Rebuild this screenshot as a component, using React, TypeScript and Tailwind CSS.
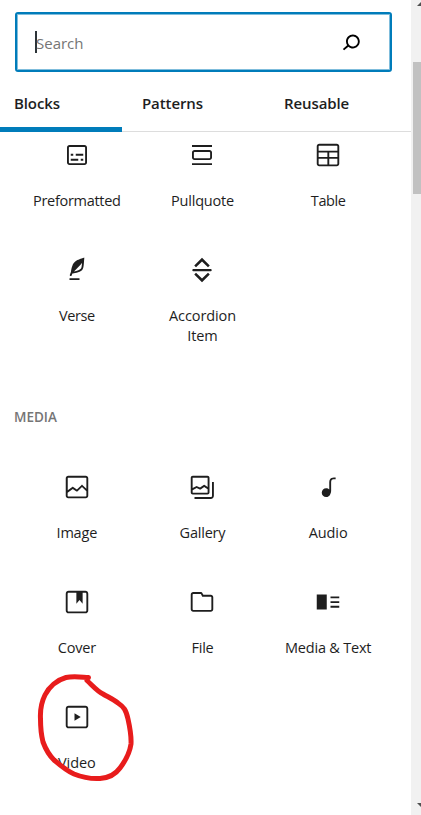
import { clsx } from 'clsx'

type Block = {
  name: string
  icon: keyof typeof paths
  spacing?: string
}

const paths = {
  preformatted:
    'M18 4H6c-1.1 0-2 .9-2 2v12c0 1.1.9 2 2 2h12c1.1 0 2-.9 2-2V6c0-1.1-.9-2-2-2zm.5 14c0 .3-.2.5-.5.5H6c-.3 0-.5-.2-.5-.5V6c0-.3.2-.5.5-.5h12c.3 0 .5.2.5.5v12zM7 16.5h6V15H7v1.5zm4-4h6V11h-6v1.5zM9 11H7v1.5h2V11zm6 5.5h2V15h-2v1.5z',
  pullquote:
    'M18 8H6c-1.1 0-2 .9-2 2v4c0 1.1.9 2 2 2h12c1.1 0 2-.9 2-2v-4c0-1.1-.9-2-2-2zm.5 6c0 .3-.2.5-.5.5H6c-.3 0-.5-.2-.5-.5v-4c0-.3.2-.5.5-.5h12c.3 0 .5.2.5.5v4zM4 4v1.5h16V4H4zm0 16h16v-1.5H4V20z',
  table:
    'M19 3H5c-1.1 0-2 .9-2 2v14c0 1.1.9 2 2 2h14c1.1 0 2-.9 2-2V5c0-1.1-.9-2-2-2zM5 4.5h14c.3 0 .5.2.5.5v3.5h-15V5c0-.3.2-.5.5-.5zm8 5.5h6.5v3.5H13V10zm-1.5 3.5h-7V10h7v3.5zm-7 5.5v-4h7v4.5H5c-.3 0-.5-.2-.5-.5zm14.5.5h-6V15h6.5v4c0 .3-.2.5-.5.5z',
  verse:
    'M17.8 2l-.9.3c-.1 0-3.6 1-5.2 2.1C10 5.5 9.3 6.5 8.9 7.1c-.6.9-1.7 4.7-1.7 6.3l-.9 2.3c-.2.4 0 .8.4 1 .1 0 .2.1.3.1.3 0 .6-.2.7-.5l.6-1.5c.3 0 .7-.1 1.2-.2.7-.1 1.4-.3 2.2-.5.8-.2 1.6-.5 2.4-.8.7-.3 1.4-.7 1.9-1.2s.8-1.2 1-1.9c.2-.7.3-1.6.4-2.4.1-.8.1-1.7.2-2.5 0-.8.1-1.5.2-2.1V2zm-1.9 5.6c-.1.8-.2 1.5-.3 2.1-.2.6-.4 1-.6 1.3-.3.3-.8.6-1.4.9-.7.3-1.4.5-2.2.8-.6.2-1.3.3-1.8.4L15 7.5c.3-.3.6-.7 1-1.1 0 .4 0 .8-.1 1.2zM6 20h8v-1.5H6V20z',
  accordion:
    'M5 11.1h14c1 0 1 1.8 0 1.8H5c-1 0-1-1.8 0-1.8zM12 2.2l6.2 6.1-1.4 1.5L12 5.2 7.2 9.8 5.8 8.3zM12 21.8l6.2-6.1-1.4-1.5L12 18.8l-4.8-4.6-1.4 1.5z',
  image:
    'M19 3H5c-1.1 0-2 .9-2 2v14c0 1.1.9 2 2 2h14c1.1 0 2-.9 2-2V5c0-1.1-.9-2-2-2zM5 4.5h14c.3 0 .5.2.5.5v8.4l-3-2.9c-.3-.3-.8-.3-1 0L11.9 14 9 12c-.3-.2-.6-.2-.8 0l-3.6 2.6V5c-.1-.3.1-.5.4-.5zm14 15H5c-.3 0-.5-.2-.5-.5v-2.4l4.1-3 3 1.9c.3.2.7.2.9-.1L16 12l3.5 3.4V19c0 .3-.2.5-.5.5z',
  gallery:
    'M16.375 4.5H4.625a.125.125 0 0 0-.125.125v8.254l2.859-1.54a.75.75 0 0 1 .68-.016l2.384 1.142 2.89-2.074a.75.75 0 0 1 .874 0l2.313 1.66V4.625a.125.125 0 0 0-.125-.125Zm.125 9.398-2.75-1.975-2.813 2.02a.75.75 0 0 1-.76.067l-2.444-1.17L4.5 14.583v1.792c0 .069.056.125.125.125h11.75a.125.125 0 0 0 .125-.125v-2.477ZM4.625 3C3.728 3 3 3.728 3 4.625v11.75C3 17.273 3.728 18 4.625 18h11.75c.898 0 1.625-.727 1.625-1.625V4.625C18 3.728 17.273 3 16.375 3H4.625ZM20 8v11c0 .69-.31 1-.999 1H6v1.5h13.001c1.52 0 2.499-.982 2.499-2.499V8H20Z',
  audio:
    'M17.7 4.3c-1.2 0-2.8 0-3.8 1-.6.6-.9 1.5-.9 2.6V14c-.6-.6-1.5-1-2.5-1C8.6 13 7 14.6 7 16.5S8.6 20 10.5 20c1.5 0 2.8-1 3.3-2.3.5-.8.7-1.8.7-2.5V7.9c0-.7.2-1.2.5-1.6.6-.6 1.8-.6 2.8-.6h.3V4.3h-.4z',
  cover:
    'M18.7 3H5.3C4 3 3 4 3 5.3v13.4C3 20 4 21 5.3 21h13.4c1.3 0 2.3-1 2.3-2.3V5.3C21 4 20 3 18.7 3zm.8 15.7c0 .4-.4.8-.8.8H5.3c-.4 0-.8-.4-.8-.8V5.3c0-.4.4-.8.8-.8h6.2v8.9l2.5-3.1 2.5 3.1V4.5h2.2c.4 0 .8.4.8.8v13.4z',
  file: 'M19 6.2h-5.9l-.6-1.1c-.3-.7-1-1.1-1.8-1.1H5c-1.1 0-2 .9-2 2v11.8c0 1.1.9 2 2 2h14c1.1 0 2-.9 2-2V8.2c0-1.1-.9-2-2-2zm.5 11.6c0 .3-.2.5-.5.5H5c-.3 0-.5-.2-.5-.5V6c0-.3.2-.5.5-.5h5.8c.2 0 .4.1.4.3l1 2H19c.3 0 .5.2.5.5v9.5z',
  mediaText: 'M3 18h8V6H3v12zM14 7.5V9h7V7.5h-7zm0 5.3h7v-1.5h-7v1.5zm0 3.7h7V15h-7v1.5z',
  video:
    'M18.7 3H5.3C4 3 3 4 3 5.3v13.4C3 20 4 21 5.3 21h13.4c1.3 0 2.3-1 2.3-2.3V5.3C21 4 20 3 18.7 3zm.8 15.7c0 .4-.4.8-.8.8H5.3c-.4 0-.8-.4-.8-.8V5.3c0-.4.4-.8.8-.8h13.4c.4 0 .8.4.8.8v13.4zM10 15l5-3-5-3v6z',
  search:
    'M13.5 6C10.5 6 8 8.5 8 11.5c0 1.1.3 2.1.9 3l-3.4 3 1 1.1 3.4-2.9c1 .9 2.2 1.4 3.6 1.4 3 0 5.5-2.5 5.5-5.5C19 8.5 16.5 6 13.5 6zm0 9.5c-2.2 0-4-1.8-4-4s1.8-4 4-4 4 1.8 4 4-1.8 4-4 4z',
}

const textBlocks: Block[] = [
  { name: 'Preformatted', icon: 'preformatted', spacing: 'tracking-[-0.3px]' },
  { name: 'Pullquote', icon: 'pullquote' },
  { name: 'Table', icon: 'table', spacing: 'tracking-[-0.4px]' },
  { name: 'Verse', icon: 'verse', spacing: 'tracking-[-0.4px]' },
  { name: 'Accordion Item', icon: 'accordion', spacing: 'tracking-[-0.1px]' },
]

const mediaBlocks: Block[] = [
  { name: 'Image', icon: 'image' },
  { name: 'Gallery', icon: 'gallery' },
  { name: 'Audio', icon: 'audio', spacing: 'tracking-[-0.1px]' },
  { name: 'Cover', icon: 'cover' },
  { name: 'File', icon: 'file' },
  { name: 'Media & Text', icon: 'mediaText' },
  { name: 'Video', icon: 'video', spacing: 'tracking-[-0.1px]' },
]

const tabs = [
  { name: 'Blocks', width: 'w-[128px]' },
  { name: 'Patterns', width: 'w-[142px]' },
  { name: 'Reusable', width: 'w-[127px]' },
]

function Icon({ name }: { name: keyof typeof paths }) {
  return (
    <svg viewBox="0 0 24 24" className="size-[30px] shrink-0" fill="currentColor" aria-hidden="true">
      <path fillRule="evenodd" d={paths[name]} />
    </svg>
  )
}

function BlockGrid({ blocks }: { blocks: Block[] }) {
  return (
    <div className="ml-[14px] grid w-[377px] grid-cols-3">
      {blocks.map((block) => (
        <button key={block.name} className="flex h-[115px] flex-col items-center px-[22px] pt-2">
          <Icon name={block.icon} />
          <span
            className={clsx(
              'mt-[21px] text-[14.5px] leading-5',
              block.spacing ?? 'tracking-[-0.2px]',
              block.name !== 'Accordion Item' && 'whitespace-nowrap',
            )}
          >
            {block.name}
          </span>
        </button>
      ))}
    </div>
  )
}

export default function App() {
  return (
    <div className="relative flex h-[815px] w-[421px] overflow-hidden bg-white font-['Open_Sans','Noto_Sans',sans-serif] text-[#1e1e1e]">
      <main className="flex w-[411px] shrink-0 flex-col">
        {/* Search */}
        <div className="mt-3 ml-[15px] flex h-[60px] w-[377px] shrink-0 items-center rounded-[3px] border-2 border-[#007cba] pr-[24px] pl-[18px] inset-ring inset-ring-[#7fbddc]">
          <span className="h-[22px] w-[2px] bg-[#2c3338]" />
          <span className="-ml-px flex-1 pt-[2px] text-[15px] text-[#757575]">Search</span>
          <span className="text-black">
            <Icon name="search" />
          </span>
        </div>

        {/* Tabs */}
        <div className="flex h-[60px] shrink-0 flex-col">
          <div className="flex h-[55px] items-center pt-2 pl-[14px] text-[15px] font-semibold tracking-[-0.1px]">
            {tabs.map((tab) => (
              <button key={tab.name} className={clsx('text-left', tab.width)}>
                {tab.name}
              </button>
            ))}
          </div>
          <div className="flex h-[5px] items-end">
            <div className="h-[5px] w-[122px] bg-[#007cba]" />
            <div className="h-px flex-1 bg-[#ddd]" />
          </div>
        </div>

        <BlockGrid blocks={textBlocks} />
        <h2 className="mt-[45px] mb-[37px] ml-[14px] h-5 text-[13.5px] leading-5 font-semibold text-[#757575]">
          MEDIA
        </h2>
        <BlockGrid blocks={mediaBlocks} />
      </main>

      {/* Scrollbar */}
      <aside className="flex w-[10px] shrink-0 flex-col justify-between overflow-hidden bg-[#f1f1f1] pl-[2px]">
        <div className="h-[62px] pt-[2px] pl-[4px]">
          <svg viewBox="0 0 8 4" className="h-1 w-2" fill="#505050">
            <path d="M4 0l4 4H0z" />
          </svg>
        </div>
        <div className="h-[132px] bg-[#c1c1c1]" />
        <div className="flex flex-1 items-end pb-[8px] pl-[4px]">
          <svg viewBox="0 0 8 4" className="h-1 w-2 shrink-0" fill="#505050">
            <path d="M0 0h8L4 4z" />
          </svg>
        </div>
      </aside>

      {/* Hand-drawn circle around Video */}
      <svg
        viewBox="0 0 110 120"
        className="pointer-events-none absolute top-[668px] left-[30px] h-[120px] w-[110px]"
        fill="none"
        stroke="#e81c1c"
        strokeWidth="5"
        strokeLinecap="round"
        strokeLinejoin="round"
      >
        <path d="M58.500 9.500C50 9 43 8 36 9.500C27 12 19 19 15 27C11 35 10 42 10.500 51C10.500 60 11 66 13 74C16 82 19 87 24 92C31 98 37 103 44 106C54 110 62 111 70 110.500C78 110 85 107 90 100C96 92 100 83 101 76C101.500 67 100 60 98 51C96 42 94 39 88 35C83 31 78 29 73 26C67 23 62 17 57 12.500" />
      </svg>
    </div>
  )
}
